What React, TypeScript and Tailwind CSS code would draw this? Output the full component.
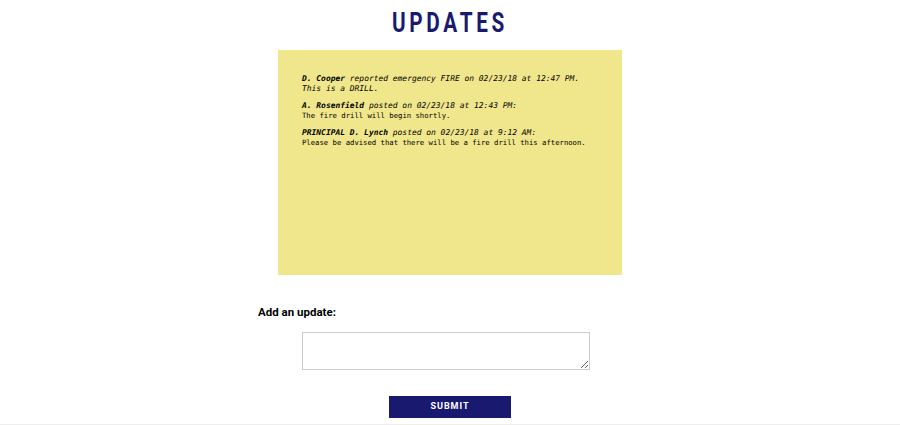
const updates = [
    { who: 'D. Cooper', what: 'reported emergency FIRE on 02/23/18 at 12:47 PM.', body: 'This is a DRILL.', italicBody: true },
    { who: 'A. Rosenfield', what: 'posted on 02/23/18 at 12:43 PM:', body: 'The fire drill will begin shortly.', italicBody: false },
    { who: 'PRINCIPAL D. Lynch', what: 'posted on 02/23/18 at 9:12 AM:', body: 'Please be advised that there will be a fire drill this afternoon.', italicBody: false },
]

export default function App() {
    return (
        <div className="w-[900px] h-[425px] bg-white overflow-hidden border-b border-[#eeeeee]" style={{ fontFamily: 'Roboto, "Liberation Sans", sans-serif' }}>
            <h1 className="pt-[10px] text-center text-[28px] leading-[26px] font-bold tracking-[5px] text-[#191970] scale-x-[0.74]">
                UPDATES
            </h1>

            <div className="mx-auto mt-[14px] w-[344px] h-[225px] bg-[#f0e68c] pl-[24px] pt-[24px] text-black" style={{ fontFamily: '"DejaVu Sans Mono", monospace' }}>
                {updates.map((u) => (
                    <div key={u.who} className="mb-[7px] leading-[10px]">
                        <div className="italic text-[7.95px]">
                            <span className="font-bold">{u.who}</span> {u.what}
                        </div>
                        <div className={u.italicBody ? 'italic text-[7.95px]' : 'text-[7.25px]'}>{u.body}</div>
                    </div>
                ))}
            </div>

            <div className="w-[384px] mx-auto mt-[30px]">
                <div className="text-[11.5px] font-bold leading-[14px] text-black">Add an update:</div>
                <textarea className="block ml-[44px] mt-[13px] w-[288px] h-[38px] border border-[#cccccc] bg-white outline-none resize-y" />
                <button className="block mx-auto mt-[26px] w-[122px] h-[22px] bg-[#191970] text-white text-[9px] font-bold tracking-[1px]">
                    SUBMIT
                </button>
            </div>
        </div>
    )
}
